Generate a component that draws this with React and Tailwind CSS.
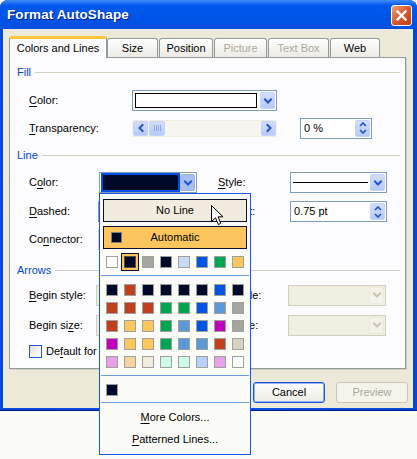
import React from "react";

const FONT = "font-['Liberation_Sans',Arial,sans-serif]";

function Chev({ dir = "down", color = "#2150d8" }) {
  const pts = {
    down: "3,4.5 6,7.5 9,4.5",
    left: "7.5,3 4.5,6 7.5,9",
    right: "4.5,3 7.5,6 4.5,9",
  }[dir];
  return (
    <svg width="12" height="12" viewBox="0 0 12 12">
      <polyline points={pts} fill="none" stroke={color} strokeWidth="2" strokeLinecap="square" />
    </svg>
  );
}

function DropBtn({ pressed, disabled }) {
  const cls = disabled
    ? "bg-[#f4f2ea] border-[#ebe8dc]"
    : pressed
    ? "bg-[#a9bff2] border-[#98b0ec]"
    : "bg-gradient-to-b from-[#d3defd] to-[#b7cbf8] border-[#c3d3fb]";
  return (
    <div className={`w-[15px] rounded-[2px] border flex items-center justify-center ${cls}`}>
      <Chev color={disabled ? "#c9c5b2" : "#2150d8"} />
    </div>
  );
}

function Combo({ w, children, pressed, disabled }) {
  const cls = disabled ? "border-[#d3cfbd] bg-[#f1eee2]" : "border-[#7f9db9] bg-white";
  return (
    <div className={`h-[21px] ${w} shrink-0 border p-px flex ${cls}`}>
      <div className="flex-1 min-w-0 flex items-center">{children}</div>
      <DropBtn pressed={pressed} disabled={disabled} />
    </div>
  );
}

function SpinArrow({ up }) {
  return (
    <svg width="8" height="5" viewBox="0 0 8 5">
      <polyline
        points={up ? "1,4 4,1 7,4" : "1,1 4,4 7,1"}
        fill="none"
        stroke="#2150d8"
        strokeWidth="1.6"
      />
    </svg>
  );
}

function Spin({ w, value }) {
  return (
    <div className={`h-[21px] ${w} shrink-0 border border-[#7f9db9] bg-white p-px flex`}>
      <div className="flex-1 flex items-center pl-[2px]">{value}</div>
      <div className="w-[15px] rounded-[2px] border border-[#c3d3fb] bg-gradient-to-b from-[#d3defd] to-[#b7cbf8] flex flex-col items-center justify-center gap-[2px]">
        <SpinArrow up />
        <SpinArrow />
      </div>
    </div>
  );
}

function U({ children }) {
  return <span className="underline underline-offset-[2px]">{children}</span>;
}

function Tab({ w, children, disabled, first }) {
  return (
    <div
      className={`${w} h-[19px] mb-px ${first ? "" : "ml-px"} border border-b-0 border-[#919b9c] rounded-t-[3px] bg-gradient-to-b from-white to-[#ecebe5] flex items-center justify-center ${
        disabled ? "text-[#aca899]" : "text-black"
      }`}
    >
      {children}
    </div>
  );
}

function Header({ children }) {
  return (
    <div className="h-[14px] flex items-center pl-[7px] pr-[5px]">
      <span className="text-[#0046d5]">{children}</span>
      <div className="flex-1 h-px bg-[#d0d0bf] ml-[4px] mt-[1px]" />
    </div>
  );
}

function XPButton({ children, disabled, focused }) {
  const cls = disabled
    ? "border-[#c9c7ba] text-[#aca899] bg-[#f5f4ea]"
    : focused
    ? "border-[#1e55d6] shadow-[inset_0_0_0_1px_#8fb3f5] bg-gradient-to-b from-white to-[#ecebe4]"
    : "border-[#003c74] bg-gradient-to-b from-white to-[#ecebe4]";
  return (
    <div className={`w-[72px] h-[21px] rounded-[3px] border flex items-center justify-center ${cls}`}>
      {children}
    </div>
  );
}

const RECENT = [
  "bg-white",
  "SEL",
  "bg-[#a5a59e]",
  "bg-[#000a28]",
  "bg-[#c8daf8]",
  "bg-[#0055e6]",
  "bg-[#00a550]",
  "bg-[#fcc65c]",
];

const GRID = [
  ["bg-[#000a28]", "bg-[#c0401c]", "bg-[#000a28]", "bg-[#000a28]", "bg-[#000a28]", "bg-[#000a28]", "bg-[#0055e6]", "bg-[#000a28]"],
  ["bg-[#c0401c]", "bg-[#c0401c]", "bg-[#c0401c]", "bg-[#00a550]", "bg-[#00a550]", "bg-[#0055e6]", "bg-[#5a9ad9]", "bg-[#a5a59e]"],
  ["bg-[#c0401c]", "bg-[#fcc65c]", "bg-[#fcc65c]", "bg-[#00a550]", "bg-[#5a9ad9]", "bg-[#0055e6]", "bg-[#c000c0]", "bg-[#a5a59e]"],
  ["bg-[#c000c0]", "bg-[#fcc65c]", "bg-[#fcc65c]", "bg-[#00a550]", "bg-[#5a9ad9]", "bg-[#5a9ad9]", "bg-[#c0401c]", "bg-[#d8d2c0]"],
  ["bg-[#e8a0e8]", "bg-[#f6d59c]", "bg-[#f2ecdc]", "bg-[#ccfce6]", "bg-[#ccfce6]", "bg-[#b8d0fc]", "bg-[#e8a0e8]", "bg-white"],
];

function Sw({ c }) {
  if (c === "SEL") {
    return (
      <div className="w-[12px] h-[12px] relative">
        <div className="absolute -left-[3px] -top-[3px] w-[18px] h-[18px] bg-[#fcc65c] border border-[#0c1030] flex items-center justify-center">
          <div className="w-[12px] h-[12px] border border-[#505050] bg-[#000a28]" />
        </div>
      </div>
    );
  }
  return <div className={`w-[12px] h-[12px] border border-[#a0a0a0] ${c}`} />;
}

function Popup() {
  return (
    <div className="absolute left-[99px] top-[193px] w-[152px] h-[262px] border border-[#1a56e4] bg-[#fbfbf8] flex flex-col">
      <div className="mt-[5px] mx-[3px] h-[23px] border border-[#0c1030] bg-[#f1ecdd] flex items-center justify-center">
        No Line
      </div>
      <div className="mt-[4px] mx-[3px] h-[23px] border border-[#0c1030] bg-[#fcc65c] flex items-center px-[7px]">
        <div className="w-[11px] h-[11px] border border-[#808080] bg-[#000a28]" />
        <div className="flex-1 text-center">Automatic</div>
        <div className="w-[11px]" />
      </div>
      <div className="mt-[7px] pl-[6px] flex gap-[6px]">
        {RECENT.map((c, i) => (
          <Sw key={i} c={c} />
        ))}
      </div>
      <div className="mt-[7px] mx-px h-px bg-[#6b9de0]" />
      <div className="mt-[8px] pl-[6px] flex flex-col gap-[6px]">
        {GRID.map((row, r) => (
          <div key={r} className="flex gap-[6px]">
            {row.map((c, i) => (
              <Sw key={i} c={c} />
            ))}
          </div>
        ))}
      </div>
      <div className="mt-[7px] mx-px h-px bg-[#6b9de0]" />
      <div className="mt-[8px] pl-[6px]">
        <div className="w-[12px] h-[12px] border border-[#a0a0a0] bg-[#000a28]" />
      </div>
      <div className="mt-[6px] mx-px h-px bg-[#6b9de0]" />
      <div className="mt-[3px] h-[22px] flex items-center justify-center">
        <span>
          <U>M</U>ore Colors...
        </span>
      </div>
      <div className="h-[22px] flex items-center justify-center">
        <span>
          <U>P</U>atterned Lines...
        </span>
      </div>
    </div>
  );
}

function Cursor() {
  return (
    <svg className="absolute left-[211px] top-[205px]" width="13" height="21" viewBox="0 0 13 21">
      <path
        d="M0.5 0.5 L0.5 16.5 L4.5 12.8 L7.3 19.5 L9.8 18.4 L7.1 11.8 L12 11.8 Z"
        fill="white"
        stroke="black"
        strokeWidth="1"
        strokeLinejoin="miter"
      />
    </svg>
  );
}

export default function App() {
  return (
    <div className={`w-[417px] h-[459px] bg-[#fbfbf8] relative overflow-hidden text-[11px] leading-none text-black ${FONT}`}>
      {/* window */}
      <div className="w-[417px] h-[411px] flex flex-col rounded-t-[8px] bg-gradient-to-r from-[#0849d6] via-[#0a55e6] to-[#0846d0] pl-[3px] pr-[4px] pb-[3px] shadow-[inset_0_-1px_0_#00138c]">
        {/* title bar */}
        <div className="h-[29px] -mx-[3px] -mr-[4px] pl-[7px] pr-[5px] pt-[1px] flex items-center justify-between rounded-t-[8px] bg-gradient-to-b from-[#3f8cf8] from-[0%] via-[#0058ee] via-[18%] to-[#0050e0]">
          <span className="text-white font-bold text-[13.5px] tracking-[0.1px] [text-shadow:1px_1px_0_#0a1e80]">
            Format AutoShape
          </span>
          <div className="w-[21px] h-[21px] rounded-[3px] border border-white bg-gradient-to-br from-[#f2a273] via-[#d9582c] to-[#c03c12] flex items-center justify-center">
            <svg width="13" height="13" viewBox="0 0 13 13">
              <path d="M2.5 2.5 L10.5 10.5 M10.5 2.5 L2.5 10.5" stroke="white" strokeWidth="2.4" strokeLinecap="square" />
            </svg>
          </div>
        </div>

        {/* client */}
        <div className="flex-1 bg-[#ece9d8] flex flex-col pl-[6px] pt-[7px]">
          {/* tabs */}
          <div className="flex items-end h-[22px] relative z-10">
            <div className="w-[98px] h-[22px] bg-[#fcfcfe] border-x border-[#919b9c] rounded-t-[3px] border-t-[3px] border-t-[#ffc83c] flex items-center justify-center pb-[1px]">
              Colors and Lines
            </div>
            <Tab w="w-[51px]" first>
              Size
            </Tab>
            <Tab w="w-[54px]">Position</Tab>
            <Tab w="w-[53px]" disabled>
              Picture
            </Tab>
            <Tab w="w-[61px]" disabled>
              Text Box
            </Tab>
            <Tab w="w-[50px]">Web</Tab>
          </div>

          {/* panel */}
          <div className="w-[397px] h-[312px] -mt-px bg-[#fcfcfe] border border-[#919b9c] shadow-[1px_1px_0_#d0cec0] flex flex-col">
            <div className="mt-[7px]">
              <Header>Fill</Header>
            </div>
            {/* fill color */}
            <div className="mt-[11px] h-[21px] flex items-center pl-[19px]">
              <div className="w-[103px]">
                <U>C</U>olor:
              </div>
              <Combo w="w-[145px]">
                <div className="ml-[1px] w-[122px] h-[15px] border border-black bg-white" />
              </Combo>
            </div>
            {/* transparency */}
            <div className="mt-[7px] h-[20px] flex items-center pl-[19px]">
              <div className="w-[103px]">
                <U>T</U>ransparency:
              </div>
              <div className="w-[145px] h-[17px] border-y border-[#efece0] bg-[#f6f5f0] flex items-stretch px-px">
                <div className="w-[15px] rounded-[2px] border border-[#c3d3fb] bg-gradient-to-b from-[#d3defd] to-[#b7cbf8] flex items-center justify-center">
                  <Chev dir="left" />
                </div>
                <div className="ml-px w-[16px] rounded-[2px] border border-[#c3d3fb] bg-gradient-to-b from-[#d3defd] to-[#b7cbf8] flex items-center justify-center gap-px">
                  <div className="w-px h-[6px] bg-[#8fa9e6]" />
                  <div className="w-px h-[6px] bg-[#8fa9e6]" />
                  <div className="w-px h-[6px] bg-[#8fa9e6]" />
                  <div className="w-px h-[6px] bg-[#8fa9e6]" />
                </div>
                <div className="flex-1" />
                <div className="w-[15px] rounded-[2px] border border-[#c3d3fb] bg-gradient-to-b from-[#d3defd] to-[#b7cbf8] flex items-center justify-center">
                  <Chev dir="right" />
                </div>
              </div>
              <div className="ml-[23px]">
                <Spin w="w-[72px]" value="0 %" />
              </div>
            </div>

            <div className="mt-[10px]">
              <Header>Line</Header>
            </div>
            {/* line color / style */}
            <div className="mt-[10px] h-[21px] flex items-center pl-[19px]">
              <div className="w-[70px]">
                C<U>o</U>lor:
              </div>
              <Combo w="w-[98px]" pressed>
                <div className="w-[80px] h-[19px] border-2 border-[#0050e6] bg-[#000a28]" />
              </Combo>
              <div className="ml-[21px] w-[72px]">
                <U>S</U>tyle:
              </div>
              <Combo w="w-[97px]">
                <div className="ml-[1px] mr-[2px] flex-1 h-px bg-black" />
              </Combo>
            </div>
            {/* dashed / weight */}
            <div className="mt-[8px] h-[21px] flex items-center pl-[19px]">
              <div className="w-[69px]">
                <U>D</U>ashed:
              </div>
              <Combo w="w-[98px]" />
              <div className="ml-[22px] w-[72px]">
                <U>W</U>eight:
              </div>
              <Spin w="w-[97px]" value="0.75 pt" />
            </div>
            {/* connector */}
            <div className="mt-[7px] h-[21px] flex items-center pl-[19px]">
              <div className="w-[69px]">
                Co<U>n</U>nector:
              </div>
              <Combo w="w-[98px]" disabled />
            </div>

            <div className="mt-[13px]">
              <Header>Arrows</Header>
            </div>
            {/* begin style */}
            <div className="mt-[8px] h-[20px] flex items-center pl-[19px]">
              <div className="w-[67px]">
                <U>B</U>egin style:
              </div>
              <Combo w="w-[98px]" disabled />
              <div className="ml-[19px] w-[75px]">
                <U>E</U>nd style:
              </div>
              <Combo w="w-[98px]" disabled />
            </div>
            {/* begin size */}
            <div className="mt-[10px] h-[20px] flex items-center pl-[19px]">
              <div className="w-[67px]">
                Begin si<U>z</U>e:
              </div>
              <Combo w="w-[98px]" disabled />
              <div className="ml-[19px] w-[75px]">
                End si<U>z</U>e:
              </div>
              <Combo w="w-[98px]" disabled />
            </div>
            {/* checkbox */}
            <div className="mt-[9px] h-[14px] flex items-center pl-[19px]">
              <div className="w-[13px] h-[13px] border border-[#1c5cd6] bg-gradient-to-br from-[#dcd9cc] via-[#f4f3ee] to-white" />
              <span className="ml-[4px]">
                De<U>f</U>ault for new objects
              </span>
            </div>
          </div>

          {/* buttons */}
          <div className="mt-[13px] mr-[5px] flex justify-end gap-[11px]">
            <XPButton>OK</XPButton>
            <XPButton focused>Cancel</XPButton>
            <XPButton disabled>Preview</XPButton>
          </div>
        </div>
      </div>

      <Popup />
      <Cursor />
    </div>
  );
}
